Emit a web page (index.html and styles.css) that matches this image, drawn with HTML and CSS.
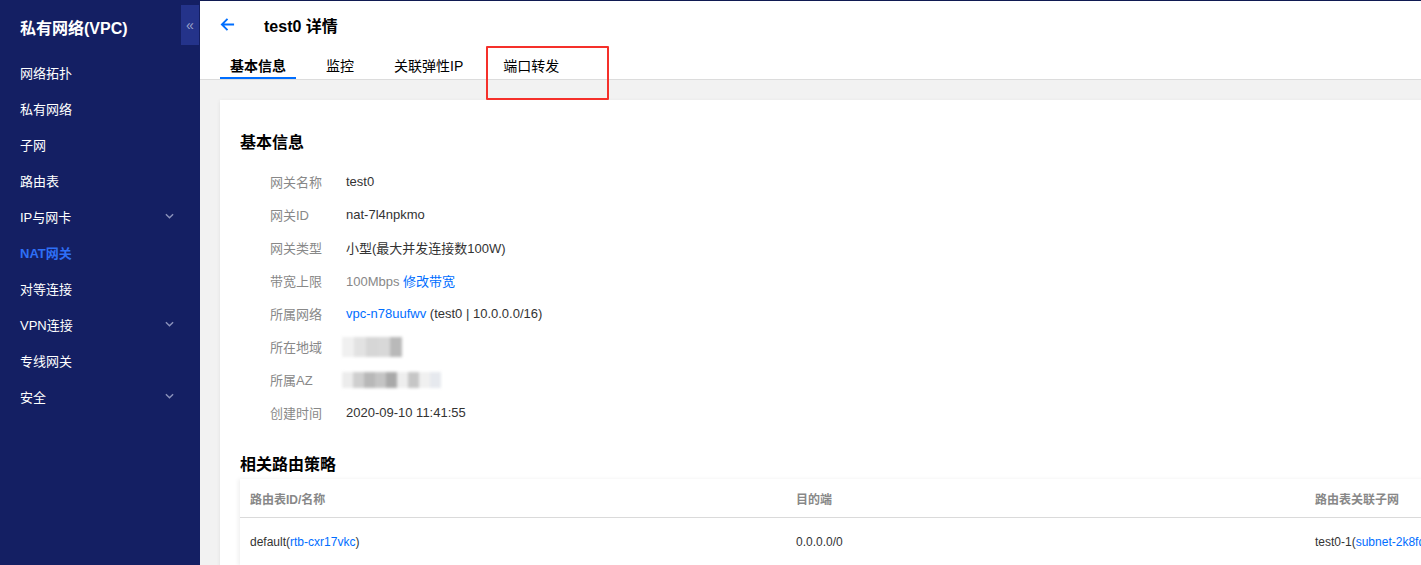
FILE: index.html
```html
<!DOCTYPE html>
<html lang="zh">
<head>
    <meta charset="UTF-8">
    <meta name="viewport" content="width=device-width, initial-scale=1.0">
    <title>test0 详情</title>
    <link rel="stylesheet" href="styles.css">
</head>
<body>
    <div class="sidebar">
        <div class="sidebar-head">
            私有网络(VPC)
            <span class="collapse">&laquo;</span>
        </div>
        <ul class="menu">
            <li>网络拓扑</li>
            <li>私有网络</li>
            <li>子网</li>
            <li>路由表</li>
            <li>IP与网卡 <svg class="chev" viewBox="0 0 10 6"><path d="M1 1l4 4 4-4" /></svg></li>
            <li class="active">NAT网关</li>
            <li>对等连接</li>
            <li>VPN连接 <svg class="chev" viewBox="0 0 10 6"><path d="M1 1l4 4 4-4" /></svg></li>
            <li>专线网关</li>
            <li>安全 <svg class="chev" viewBox="0 0 10 6"><path d="M1 1l4 4 4-4" /></svg></li>
        </ul>
    </div>

    <div class="main">
        <div class="header">
            <div class="title-row">
                <svg class="back" viewBox="0 0 16 16"><path d="M15 8H2M8 2L2 8l6 6" /></svg>
                <h1>test0 详情</h1>
            </div>
            <div class="tabs">
                <span class="tab active">基本信息</span>
                <span class="tab">监控</span>
                <span class="tab">关联弹性IP</span>
                <span class="tab">端口转发</span>
            </div>
        </div>

        <div class="mark"></div>

        <div class="card">
            <h2>基本信息</h2>
            <div class="info">
                <div class="row"><span class="label">网关名称</span><span class="value">test0</span></div>
                <div class="row"><span class="label">网关ID</span><span class="value">nat-7l4npkmo</span></div>
                <div class="row"><span class="label">网关类型</span><span class="value">小型(最大并发连接数100W)</span></div>
                <div class="row"><span class="label">带宽上限</span><span class="value muted">100Mbps <a class="link">修改带宽</a></span></div>
                <div class="row"><span class="label">所属网络</span><span class="value"><a class="link">vpc-n78uufwv</a> (test0 | 10.0.0.0/16)</span></div>
                <div class="row">
                    <span class="label">所在地域</span>
                    <span class="mosaic">
                        <i style="background:#f0f0f0"></i><i style="background:#e2e2e2"></i><i style="background:#d6d6d6"></i><i style="background:#d8d8d8"></i><i style="background:#b9b9b9"></i>
                    </span>
                </div>
                <div class="row">
                    <span class="label">所属AZ</span>
                    <span class="mosaic wide">
                        <i style="background:#ececec"></i><i style="background:#cfcfcf"></i><i style="background:#b8b8b8"></i><i style="background:#c4c4c4"></i><i style="background:#a9a9a9"></i><i style="background:#eeeeee"></i><i style="background:#c6c6c6"></i><i style="background:#f0f0f0"></i><i style="background:#e6e9ee"></i>
                    </span>
                </div>
                <div class="row"><span class="label">创建时间</span><span class="value">2020-09-10 11:41:55</span></div>
            </div>

            <h2 class="second">相关路由策略</h2>
            <div class="table">
                <div class="tr th">
                    <span>路由表ID/名称</span>
                    <span>目的端</span>
                    <span>路由表关联子网</span>
                </div>
                <div class="tr">
                    <span>default(<a class="link">rtb-cxr17vkc</a>)</span>
                    <span>0.0.0.0/0</span>
                    <span>test0-1(<a class="link">subnet-2k8fq0ab</a>)</span>
                </div>
            </div>
        </div>
    </div>
</body>
</html>
```

FILE: styles.css
```css
body {
    margin: 0;
    height: 100vh;
    display: flex;
    overflow: hidden;
    font-family: "Liberation Sans", "Noto Sans CJK SC", sans-serif;
    color: #333;
}

.sidebar {
    width: 200px;
    flex-shrink: 0;
    background: #141f63;
    color: #fff;
}

.sidebar-head {
    position: relative;
    height: 54px;
    padding-left: 20px;
    display: flex;
    align-items: center;
    font-size: 16px;
    font-weight: bold;
}

.collapse {
    position: absolute;
    right: 1px;
    top: 5px;
    width: 18px;
    height: 40px;
    background: #24338a;
    color: #9aa2c8;
    font-size: 14px;
    font-weight: normal;
    display: flex;
    align-items: center;
    justify-content: center;
}

.menu {
    list-style: none;
    margin: 0;
    padding: 0;
}

.menu li {
    height: 36px;
    padding: 0 26px 0 20px;
    display: flex;
    align-items: center;
    justify-content: space-between;
    font-size: 13px;
}

.menu li.active {
    color: #2e6ff6;
    font-weight: bold;
}

.chev {
    width: 9px;
    height: 6px;
    fill: none;
    stroke: #8b92bb;
    stroke-width: 1.6;
}

.main {
    position: relative;
    flex: 1;
    min-width: 0;
    background: #f2f2f2;
    border-top: 1px solid #101a52;
    overflow: hidden;
}

.header {
    background: #fff;
    border-bottom: 1px solid #dcdcdc;
}

.title-row {
    height: 47px;
    padding-left: 20px;
    display: flex;
    align-items: center;
}

.back {
    width: 15px;
    height: 15px;
    fill: none;
    stroke: #006eff;
    stroke-width: 2;
}

h1 {
    margin: 0 0 0 29px;
    font-size: 16px;
    font-weight: bold;
    color: #000;
}

.tabs {
    display: flex;
    gap: 20px;
    padding-left: 20px;
}

.tab {
    padding: 8px 10px 1px;
    line-height: 20px;
    font-size: 14px;
    color: #000;
    border-bottom: 2px solid transparent;
}

.tab.active {
    font-weight: bold;
    border-bottom-color: #006eff;
}

.mark {
    position: absolute;
    left: 286px;
    top: 45px;
    width: 119px;
    height: 50px;
    border: 2px solid #f5302a;
    border-radius: 1px;
}

.card {
    width: 1240px;
    margin: 20px 0 0 20px;
    padding: 33px 20px 20px;
    background: #fff;
    box-shadow: 0 1px 4px rgba(0, 0, 0, 0.08);
}

h2 {
    margin: 0;
    font-size: 16px;
    line-height: 20px;
    font-weight: bold;
    color: #000;
}

h2.second {
    margin-top: 26px;
}

.info {
    margin-top: 12px;
    padding-left: 30px;
}

.row {
    height: 33px;
    display: flex;
    align-items: center;
    font-size: 13px;
}

.label {
    width: 76px;
    color: #888;
}

.value {
    color: #333;
}

.value.muted {
    color: #888;
}

.link {
    color: #006eff;
}

.mosaic {
    display: flex;
    margin-left: -4px;
    filter: blur(1.5px);
}

.mosaic i {
    width: 12px;
    height: 20px;
}

.mosaic.wide i {
    width: 11px;
    height: 16px;
}

.table {
    margin-top: 4px;
    box-shadow: -2px 0 4px rgba(0, 0, 0, 0.06);
}

.tr {
    display: grid;
    grid-template-columns: 546px 519px 300px;
    font-size: 12px;
}

.tr span {
    padding-left: 10px;
    white-space: nowrap;
}

.th {
    height: 38px;
    align-items: center;
    color: #888;
    font-weight: bold;
    border-bottom: 1px solid #dadada;
}

.tr:not(.th) {
    height: 48px;
    align-items: center;
}
```
